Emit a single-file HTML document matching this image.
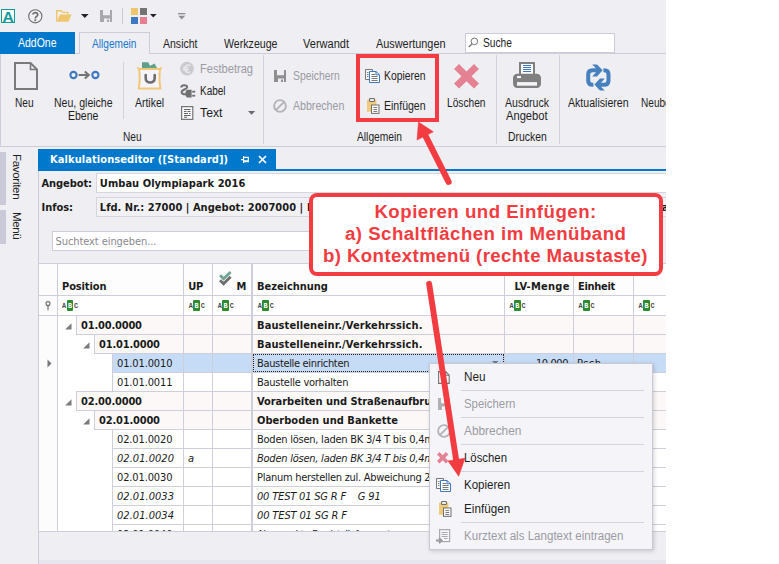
<!DOCTYPE html>
<html><head><meta charset="utf-8">
<style>
html,body{margin:0;padding:0;background:#fff;}
body{width:779px;height:564px;overflow:hidden;position:relative;}
#app{position:absolute;left:0;top:0;width:666px;height:564px;background:#eeeef3;overflow:hidden;font-family:"Liberation Sans",sans-serif;font-size:12px;color:#1e1e1e;}
.a{position:absolute;}
.t{position:absolute;white-space:nowrap;line-height:14px;font-family:"Liberation Sans",sans-serif;font-size:12px;}
.th{position:absolute;white-space:pre;line-height:14px;font-family:"DejaVu Sans Condensed","DejaVu Sans",sans-serif;font-size:11px;color:#1a1a1a;}
.b{font-weight:bold;}
.i{font-style:italic;}
.dis{color:#9b9ba3;}
svg{position:absolute;overflow:visible;}
.vsep{position:absolute;width:1px;background:#d2d2dc;}
.hl{position:absolute;height:1px;background:#cfcfdb;}
.fi{font:bold 6.8px/8px "Liberation Mono",monospace;color:#4a4a4a;}
.co{font-size:18.67px;line-height:22px;color:#f23c41;}
.vl{position:absolute;width:1px;background:#cfcfdb;}
</style></head><body>
<div id="app">

<!-- ===== QAT ===== -->
<div id="qat">
  <div class="a" style="left:1px;top:9px;width:12px;height:12px;border:1.5px solid #129a9a;background:#f6fbfb;"></div>
  <div class="t b" style="left: 2.5px; font-size: 15.5px; color: rgb(18, 154, 154); top: 10px;">A</div>
  <svg style="left:28px;top:9px" width="15" height="15" viewBox="0 0 15 15"><circle cx="7.3" cy="7.3" r="6.6" fill="#f2f2f6" stroke="#6d6d6d" stroke-width="1.1"></circle><path d="M4.9 5.6 C4.9 3 9.7 3 9.7 5.7 C9.7 7.5 7.3 7.4 7.3 9.4" fill="none" stroke="#6d6d6d" stroke-width="1.7"></path><rect x="6.4" y="10.3" width="1.8" height="1.8" fill="#6d6d6d"></rect></svg>
  <svg style="left:56px;top:10px" width="16" height="12" viewBox="0 0 16 12"><path d="M0.7 11.2 V0.8 H5.2 L6.8 2.4 H11.7 V4.6" fill="none" stroke="#efc56e" stroke-width="1.4"></path><path d="M4 4.4 H15.6 L12.4 11.8 H0.6 Z" fill="#efc56e"></path></svg>
  <svg style="left:81px;top:14px" width="8" height="4" viewBox="0 0 8 4"><path d="M0 0 H7.6 L3.8 4 Z" fill="#222"></path></svg>
  <svg style="left:100px;top:10px" width="12" height="12" viewBox="0 0 12 12"><path d="M0 0 H12 V12 H0 Z M3 0 V5.3 H10 V0 Z M4 8.4 V12 H10 V8.4 Z" fill="#a9a9ad" fill-rule="evenodd"></path><rect x="7" y="9.5" width="2" height="2.5" fill="#a9a9ad"></rect></svg>
  <div class="a" style="left:122px;top:8px;width:1px;height:16px;background:#c9c9d3;"></div>
  <div class="a" style="left:131px;top:8px;width:7px;height:7px;background:#efc56e;"></div>
  <div class="a" style="left:140px;top:8px;width:7px;height:7px;background:#737373;"></div>
  <div class="a" style="left:131px;top:17px;width:7px;height:7px;background:#3f78bf;"></div>
  <div class="a" style="left:140px;top:17px;width:7px;height:7px;background:#e87d92;"></div>
  <svg style="left:150px;top:14px" width="7" height="4" viewBox="0 0 7 4"><path d="M0 0 H6.6 L3.3 3.6 Z" fill="#222"></path></svg>
  <svg style="left:178px;top:13px" width="8" height="7" viewBox="0 0 8 7"><rect x="0" y="0" width="7.4" height="1.3" fill="#8f8f95"></rect><path d="M0.2 2.8 H7.2 L3.7 6.4 Z" fill="#8f8f95"></path></svg>
</div>

<!-- ===== TABS ===== -->
<div id="tabs">
  <div class="a" style="left:0;top:53px;width:666px;height:1px;background:#cdcdd9;"></div>
  <div class="a" style="left:0;top:32px;width:75px;height:22px;background:#0079cc;"></div>
  <div class="t" style="left: 18px; color: rgb(255, 255, 255); transform-origin: 0px 0px; transform: scaleX(0.874); top: 36px;">AddOne</div>
  <div class="a" style="left:79px;top:32px;width:71px;height:22px;border:1px solid #cdcdd9;border-bottom:none;background:#eeeef3;box-sizing:border-box;"></div>
  <div class="t" style="left: 92px; color: rgb(22, 119, 207); transform-origin: 0px 0px; transform: scaleX(0.844); top: 37px;">Allgemein</div>
  <div class="t" style="left: 163px; transform-origin: 0px 0px; transform: scaleX(0.877); top: 37px;">Ansicht</div>
  <div class="t" style="left: 223.5px; transform-origin: 0px 0px; transform: scaleX(0.885); top: 37px;">Werkzeuge</div>
  <div class="t" style="left: 303px; transform-origin: 0px 0px; transform: scaleX(0.919); top: 37px;">Verwandt</div>
  <div class="t" style="left: 376px; transform-origin: 0px 0px; transform: scaleX(0.906); top: 37px;">Auswertungen</div>
  <div class="a" style="left:465px;top:33px;width:150px;height:19.5px;background:#fff;border:1px solid #cdcdd9;box-sizing:border-box;"></div>
  <svg style="left:468px;top:37px" width="11" height="11" viewBox="0 0 11 11"><circle cx="6.4" cy="4.4" r="3.3" fill="none" stroke="#777" stroke-width="1"></circle><path d="M4 6.8 L0.8 10" stroke="#777" stroke-width="1.3"></path></svg>
  <div class="t" style="left: 483px; transform-origin: 0px 0px; transform: scaleX(0.852); top: 36px;">Suche</div>
</div>

<!-- ===== RIBBON ===== -->
<div id="ribbon">
  <div class="a" style="left:0;top:54px;width:1px;height:92px;background:#cdcdd9;"></div>
  <div class="a" style="left:0;top:146px;width:666px;height:1px;background:#cdcdd9;"></div>
  <!-- Neu -->
  <svg style="left:14px;top:62px" width="24" height="28" viewBox="0 0 24 28"><path d="M1 1 H16.5 L23 7.5 V27 H1 Z" fill="none" stroke="#7a7a7a" stroke-width="2" stroke-linejoin="miter"></path><path d="M16.5 1 V7.5 H23" fill="none" stroke="#7a7a7a" stroke-width="1.6"></path></svg>
  <div class="t" style="left: 15.4px; transform-origin: 0px 0px; transform: scaleX(0.845); top: 96px;">Neu</div>
  <!-- Neu, gleiche Ebene -->
  <svg style="left:68.6px;top:70px" width="31" height="10" viewBox="0 0 31 10"><circle cx="4.5" cy="5" r="3.1" fill="none" stroke="#3f78bf" stroke-width="2.1"></circle><circle cx="26.4" cy="5" r="3.1" fill="none" stroke="#3f78bf" stroke-width="2.1"></circle><path d="M9.6 5 H19.4" stroke="#737373" stroke-width="2"></path><path d="M15.8 1.4 L19.8 5 L15.8 8.6" fill="none" stroke="#737373" stroke-width="2"></path></svg>
  <div class="t" style="left: 54.4px; transform-origin: 0px 0px; transform: scaleX(0.878); top: 96px;">Neu, gleiche</div>
  <div class="t" style="left: 68px; transform-origin: 0px 0px; transform: scaleX(0.873); top: 108.8px;">Ebene</div>
  <div class="vsep" style="left:123px;top:62px;height:57px;"></div>
  <!-- Artikel -->
  <svg style="left:137px;top:61px" width="26" height="30" viewBox="0 0 26 30"><path d="M5 7.4 V1.2 H11.2 L13.2 5.2 L8.4 7.4 Z" fill="#5f9f8a"></path><path d="M7.6 7.4 L17.6 2.6 L20.2 7.4 Z" fill="#62a38c"></path><path d="M2.2 8 C2.9 14 2.9 22 1.7 27.6 H23.5 C22.3 22 22.3 14 23 8 Z" fill="#f5f5f9" stroke="#f0c878" stroke-width="2" stroke-linejoin="round"></path><path d="M0.9 6.9 L2.4 8.2 M24.3 6.9 L22.8 8.2" stroke="#f0c878" stroke-width="1.8" stroke-linecap="round"></path><path d="M8.7 14 V17.2 C8.7 23 17.7 23 17.7 17.2 V14" fill="none" stroke="#6e6e6e" stroke-width="2.6" stroke-linecap="round"></path></svg>
  <div class="t" style="left: 135.3px; transform-origin: 0px 0px; transform: scaleX(0.87); top: 96px;">Artikel</div>
  <!-- small buttons -->
  <svg style="left:180px;top:62px" width="14" height="14" viewBox="0 0 14 14"><circle cx="7" cy="6.6" r="6.9" fill="#cbcbcf"></circle><path d="M10.2 3.6 C7.6 2 4.8 3.8 4.8 6.7 C4.8 9.6 7.6 11.4 10.2 9.8 M3 5.7 H8.6 M3 7.7 H8.6" fill="none" stroke="#e9e9ed" stroke-width="1.4"></path></svg>
  <div class="t dis" style="left: 199.5px; transform-origin: 0px 0px; transform: scaleX(0.924); top: 62px;">Festbetrag</div>
  <svg style="left:180px;top:84px" width="16" height="14" viewBox="0 0 16 14"><path d="M1.2 3.4 C1.2 0.6 7.2 0.4 7.2 3 C7.2 5.6 1.6 5.4 1.6 8.2 C1.6 10.2 4 10.4 6.4 10.2" fill="none" stroke="#707070" stroke-width="2"></path><path d="M7.6 5.8 H11.6 V13.6 H7.6 C4.6 13.6 4.6 5.8 7.6 5.8 Z" fill="#707070"></path><rect x="12.2" y="6.8" width="3" height="1.8" fill="#707070"></rect><rect x="12.2" y="10.8" width="3" height="1.8" fill="#707070"></rect></svg>
  <div class="t" style="left: 199.5px; transform-origin: 0px 0px; transform: scaleX(0.834); top: 84px;">Kabel</div>
  <svg style="left:181px;top:106px" width="13" height="14" viewBox="0 0 13 14"><rect x="0.6" y="0.6" width="11.2" height="12.8" fill="#f8f8fb" stroke="#757575" stroke-width="1.2"></rect><path d="M3 3.5 H9.5 M3 5.5 H5.5 M6.5 5.5 H9.5 M3 7.5 H7 M8 7.5 H9.5 M3 9.5 H9.5 M3 11.3 H6" stroke="#666" stroke-width="1.1"></path></svg>
  <div class="t" style="left: 199.5px; transform-origin: 0px 0px; transform: scaleX(1.022); top: 106.2px;">Text</div>
  <svg style="left:247.5px;top:111px" width="8" height="4" viewBox="0 0 8 4"><path d="M0 0 H7.2 L3.6 3.8 Z" fill="#6a6a6a"></path></svg>
  <div class="t" style="left: 122.7px; transform-origin: 0px 0px; transform: scaleX(0.845); top: 130px;">Neu</div>
  <div class="vsep" style="left:263px;top:55px;height:89px;"></div>
  <!-- Speichern / Abbrechen -->
  <svg style="left:274px;top:70px" width="12" height="12" viewBox="0 0 12 12"><path d="M0 0 H12 V12 H0 Z M3 0 V5.3 H10 V0 Z M4 8.4 V12 H10 V8.4 Z" fill="#8f8f92" fill-rule="evenodd"></path><rect x="7" y="9.5" width="2" height="2.5" fill="#8f8f92"></rect></svg>
  <div class="t dis" style="left: 292.7px; transform-origin: 0px 0px; transform: scaleX(0.864); top: 69.3px;">Speichern</div>
  <svg style="left:273px;top:99px" width="14" height="14" viewBox="0 0 14 14"><circle cx="7" cy="7" r="5.9" fill="none" stroke="#b4b4b8" stroke-width="1.9"></circle><path d="M2.8 11.2 L11.2 2.8" stroke="#b4b4b8" stroke-width="1.9"></path></svg>
  <div class="t dis" style="left: 292.7px; transform-origin: 0px 0px; transform: scaleX(0.884); top: 99.3px;">Abbrechen</div>
  <!-- Kopieren / Einfügen -->
  <svg style="left:365px;top:69px" width="15" height="14" viewBox="0 0 15 14"><path d="M0.5 0.5 H7.5 V10.5 H0.5 Z" fill="#f7f7fa" stroke="#777" stroke-width="1"></path><path d="M2 3.5 H3.5 M2 5.5 H3.5 M2 7.5 H3.5" stroke="#7a7a7a" stroke-width="1"></path><path d="M4.5 2.5 H11 L14.5 5.8 V13.5 H4.5 Z" fill="#fbfcfe" stroke="#3f78bf" stroke-width="1"></path><path d="M6.5 5.5 H10.5 M6.5 7.5 H12.5 M6.5 9.5 H12.5 M6.5 11.5 H12.5" stroke="#7a7a7a" stroke-width="1"></path><path d="M11 2.5 V5.8 H14.3" fill="none" stroke="#3f78bf" stroke-width="1"></path></svg>
  <div class="t" style="left: 384.4px; transform-origin: 0px 0px; transform: scaleX(0.866); top: 69.3px;">Kopieren</div>
  <svg style="left:367px;top:98px" width="14" height="16" viewBox="0 0 14 16"><path d="M0 1.8 H9.4 V7 H4.5 V13.8 H0 Z" fill="#f1cb7c"></path><rect x="2.5" y="0.5" width="5" height="3" rx="0.8" fill="#ececf0" stroke="#707070" stroke-width="1.1"></rect><rect x="4.5" y="7" width="7.5" height="8.4" fill="#fafafc" stroke="#707070" stroke-width="1"></rect><path d="M6.4 9.5 H10.2 M6.4 11.5 H10.2 M6.4 13.5 H10.2" stroke="#707070" stroke-width="0.9"></path></svg>
  <div class="t" style="left: 384.4px; transform-origin: 0px 0px; transform: scaleX(0.878); top: 99.3px;">Einfügen</div>
  <div class="t" style="left: 356.7px; transform-origin: 0px 0px; transform: scaleX(0.854); top: 130px;">Allgemein</div>
  <!-- Löschen -->
  <svg style="left:453.5px;top:63.8px" width="25" height="25" viewBox="0 0 25 25"><path d="M5 0 L12.5 7.5 L20 0 L25 5 L17.5 12.3 L25 19.6 L20 24.6 L12.5 17.2 L5 24.6 L0 19.6 L7.5 12.3 L0 5 Z" fill="#e48193"></path></svg>
  <div class="t" style="left: 446.5px; transform-origin: 0px 0px; transform: scaleX(0.848); top: 96px;">Löschen</div>
  <div class="vsep" style="left:496px;top:55px;height:89px;"></div>
  <!-- Ausdruck Angebot -->
  <svg style="left:513px;top:62px" width="28" height="26" viewBox="0 0 28 26"><rect x="7" y="1" width="14" height="12" fill="#fbfcfe" stroke="#808080" stroke-width="2"></rect><path d="M10 3.5 H18 M10 5.5 H18 M10 7.5 H18 M10 9.5 H18" stroke="#3f78bf" stroke-width="1"></path><rect x="0" y="11.8" width="28" height="14.1" rx="4.2" fill="#808080"></rect><rect x="4" y="20.1" width="20" height="3.6" fill="#f4f4f8"></rect><rect x="4" y="14" width="4" height="2.1" fill="#f4f4f8"></rect></svg>
  <div class="t" style="left: 504.9px; transform-origin: 0px 0px; transform: scaleX(0.879); top: 96px;">Ausdruck</div>
  <div class="t" style="left: 505.7px; transform-origin: 0px 0px; transform: scaleX(0.93); top: 108.8px;">Angebot</div>
  <div class="t" style="left: 507.5px; transform-origin: 0px 0px; transform: scaleX(0.866); top: 130px;">Drucken</div>
  <div class="vsep" style="left:559px;top:55px;height:89px;"></div>
  <!-- Aktualisieren -->
  <svg style="left:585.5px;top:63.5px" width="25" height="27" viewBox="0 0 25 27"><path d="M10 6.3 H6.6 C3.6 6.3 2.2 8 2.2 10.6 V16.5 C2.2 19.4 3.8 20.8 6.6 20.8 H7.4" fill="none" stroke="#4780bf" stroke-width="4"></path><path d="M6.2 0.4 H11 L16.6 6.3 L11 12.4 H6.2 L10 8.3 V4.3 Z" fill="#4780bf"></path><path d="M17.4 6.3 H18.2 C21 6.3 22.5 8 22.5 10.6 V16.5 C22.5 19.4 21 20.8 18.2 20.8 H15" fill="none" stroke="#4780bf" stroke-width="4"></path><path d="M18.8 14.6 H14 L8.4 20.6 L14 26.6 H18.8 L15 22.7 V18.7 Z" fill="#4780bf"></path></svg>
  <div class="t" style="left: 567.8px; transform-origin: 0px 0px; transform: scaleX(0.882); top: 96px;">Aktualisieren</div>
  <div class="t" style="left: 641.2px; transform-origin: 0px 0px; transform: scaleX(0.84); top: 96px;">Neubewerten</div>
</div>
<!-- ===== SIDEBAR ===== -->
<div id="side">
  <div class="a" style="left:0;top:152px;width:5.5px;height:52.5px;background:#c9c9d8;"></div>
  <div class="a" style="left:0;top:210px;width:5.5px;height:34px;background:#c9c9d8;"></div>
  <div class="t" style="left:24px;top:154px;transform-origin:0 0;transform:rotate(90deg);letter-spacing:-0.3px;font-size:11.5px;">Favoriten</div>
  <div class="t" style="left:24px;top:211.5px;transform-origin:0 0;transform:rotate(90deg);letter-spacing:-0.4px;font-size:11.5px;">Menü</div>
</div>
<!-- ===== DOC ===== -->
<div id="doc">
  <div class="a" style="left:38px;top:149px;width:1px;height:415px;background:#cdcdd9;"></div>
  <div class="a" style="left:38px;top:149px;width:238px;height:20px;background:#0079cc;"></div>
  <div class="a" style="left:38px;top:169px;width:628px;height:2px;background:#0079cc;"></div>
  <div class="th b" style="left: 50px; color: rgb(255, 255, 255); letter-spacing: 0.08px; top: 153px;">Kalkulationseditor ([Standard])</div>
  <svg style="left:241px;top:156px" width="8" height="7" viewBox="0 0 8 7"><path d="M0 3.6 H2.6 M2.6 0 V7 M2.6 1.3 H7.3 V5.6 H2.6 M2.6 4.8 H7.3" fill="none" stroke="#fff" stroke-width="1.2"></path></svg>
  <svg style="left:258px;top:155px" width="9" height="9" viewBox="0 0 9 9"><path d="M1 1 L8 8 M8 1 L1 8" stroke="#fff" stroke-width="1.7"></path></svg>
  <!-- Angebot -->
  <div class="th b" style="left: 41.5px; letter-spacing: -0.08px; top: 177px;">Angebot:</div>
  <div class="a" style="left:96px;top:173px;width:570px;height:19.5px;background:#fff;border:1px solid #d5d5e0;border-right:none;box-sizing:border-box;"></div>
  <div class="th b" style="left: 99.8px; letter-spacing: 0.05px; top: 177px;">Umbau Olympiapark 2016</div>
  <div class="th b" style="left: 41.5px; letter-spacing: -0.04px; top: 200.5px;">Infos:</div>
  <div class="a" style="left:96px;top:197px;width:570px;height:19.5px;background:#f2f2f6;border:1px solid #d5d5e0;border-right:none;box-sizing:border-box;"></div>
  <div class="th b" style="left: 99.8px; letter-spacing: 0.03px; top: 200.5px;">Lfd. Nr.: 27000 | Angebot: 2007000 |</div>
  <div class="th b" style="left: 307px; top: 200.5px;">Bezeichnung: Umbau Olympiapark 2016 | Bearbeiter: Administrator</div>
  <!-- search -->
  <div class="a" style="left:52px;top:231px;width:600px;height:19.5px;background:#fff;border:1px solid #cdcdd9;box-sizing:border-box;"></div>
  <div class="th" style="left: 55.5px; color: rgb(138, 138, 144); letter-spacing: -0.08px; top: 235px;">Suchtext eingeben...</div>
</div>
<!-- ===== GRID ===== -->
<!--GRIDSTART-->
<div id="grid">
<div class="a" style="left:39px;top:264px;width:627px;height:267px;background:#fff;"></div>
<div class="a" style="left:39px;top:264px;width:18px;height:267px;background:#fcfcfd;"></div>
<div class="a" style="left:57px;top:264px;width:609px;height:31px;background:#fdfdfe;"></div>
<div class="a" style="left:76px;top:316px;width:590px;height:18px;background:#fcf8f7;"></div>
<div class="th b" style="left: 81px; letter-spacing: -0.18px; top: 318.6px;">01.00.0000</div>
<div class="th b" style="left: 257px; letter-spacing: 0.11px; top: 318.6px;">Baustelleneinr./Verkehrssich.</div>
<div class="hl" style="left:76px;top:334px;width:590px;background:#cfcfdc;"></div>
<div class="hl" style="left:76px;top:315px;width:590px;background:#cfcfdc;"></div>
<div class="vl" style="left:76px;top:315px;height:19px;background:#cfcfdc;"></div>
<svg style="left:65px;top:322.5px" width="7" height="7" viewBox="0 0 7 7"><path d="M6.5 0.2 V6.5 H0.2 Z" fill="#7a7a80"></path></svg>
<div class="a" style="left:94px;top:335px;width:572px;height:18px;background:#fcf8f7;"></div>
<div class="th b" style="left: 99px; letter-spacing: -0.18px; top: 337.6px;">01.01.0000</div>
<div class="th b" style="left: 257px; letter-spacing: 0.11px; top: 337.6px;">Baustelleneinr./Verkehrssich.</div>
<div class="hl" style="left:94px;top:353px;width:572px;background:#cfcfdc;"></div>
<div class="hl" style="left:94px;top:334px;width:572px;background:#cfcfdc;"></div>
<div class="vl" style="left:94px;top:334px;height:19px;background:#cfcfdc;"></div>
<svg style="left:83px;top:341.5px" width="7" height="7" viewBox="0 0 7 7"><path d="M6.5 0.2 V6.5 H0.2 Z" fill="#7a7a80"></path></svg>
<div class="a" style="left:112px;top:354px;width:554px;height:18px;background:#c6dbf5;"></div>
<div class="th" style="left: 117px; letter-spacing: -0.13px; top: 356.6px;">01.01.0010</div>
<div class="th" style="left: 257px; letter-spacing: -0.34px; top: 356.6px;">Baustelle einrichten</div>
<div class="hl" style="left:112px;top:372px;width:554px;background:#cfcfdc;"></div>
<div class="hl" style="left:112px;top:353px;width:554px;background:#cfcfdc;"></div>
<div class="vl" style="left:112px;top:353px;height:19px;background:#cfcfdc;"></div>
<div class="th" style="left: 117px; letter-spacing: -0.13px; top: 375.6px;">01.01.0011</div>
<div class="th" style="left: 257px; letter-spacing: -0.26px; top: 375.6px;">Baustelle vorhalten</div>
<div class="hl" style="left:112px;top:391px;width:554px;background:#cfcfdc;"></div>
<div class="hl" style="left:112px;top:372px;width:554px;background:#cfcfdc;"></div>
<div class="vl" style="left:112px;top:372px;height:19px;background:#cfcfdc;"></div>
<div class="a" style="left:76px;top:392px;width:590px;height:18px;background:#fcf8f7;"></div>
<div class="th b" style="left: 81px; letter-spacing: -0.18px; top: 394.6px;">02.00.0000</div>
<div class="th b" style="left: 257px; letter-spacing: -0.04px; top: 394.6px;">Vorarbeiten und Straßenaufbruch</div>
<div class="hl" style="left:76px;top:410px;width:590px;background:#cfcfdc;"></div>
<div class="hl" style="left:76px;top:391px;width:590px;background:#cfcfdc;"></div>
<div class="vl" style="left:76px;top:391px;height:19px;background:#cfcfdc;"></div>
<svg style="left:65px;top:398.5px" width="7" height="7" viewBox="0 0 7 7"><path d="M6.5 0.2 V6.5 H0.2 Z" fill="#7a7a80"></path></svg>
<div class="a" style="left:94px;top:411px;width:572px;height:18px;background:#fcf8f7;"></div>
<div class="th b" style="left: 99px; letter-spacing: -0.18px; top: 413.6px;">02.01.0000</div>
<div class="th b" style="left: 257px; letter-spacing: 0.03px; top: 413.6px;">Oberboden und Bankette</div>
<div class="hl" style="left:94px;top:429px;width:572px;background:#cfcfdc;"></div>
<div class="hl" style="left:94px;top:410px;width:572px;background:#cfcfdc;"></div>
<div class="vl" style="left:94px;top:410px;height:19px;background:#cfcfdc;"></div>
<svg style="left:83px;top:417.5px" width="7" height="7" viewBox="0 0 7 7"><path d="M6.5 0.2 V6.5 H0.2 Z" fill="#7a7a80"></path></svg>
<div class="th" style="left: 117px; letter-spacing: -0.13px; top: 432.6px;">02.01.0020</div>
<div class="th" style="left: 257px; letter-spacing: -0.24px; top: 432.6px;">Boden lösen, laden BK 3/4 T bis 0,4m</div>
<div class="hl" style="left:112px;top:448px;width:554px;background:#cfcfdc;"></div>
<div class="hl" style="left:112px;top:429px;width:554px;background:#cfcfdc;"></div>
<div class="vl" style="left:112px;top:429px;height:19px;background:#cfcfdc;"></div>
<div class="th i" style="left: 117px; letter-spacing: 0.04px; top: 451.6px;">02.01.0020</div>
<div class="th i" style="left: 188px; top: 451.6px;">a</div>
<div class="th i" style="left: 257px; letter-spacing: -0.24px; top: 451.6px;">Boden lösen, laden BK 3/4 T bis 0,4m</div>
<div class="hl" style="left:112px;top:467px;width:554px;background:#cfcfdc;"></div>
<div class="hl" style="left:112px;top:448px;width:554px;background:#cfcfdc;"></div>
<div class="vl" style="left:112px;top:448px;height:19px;background:#cfcfdc;"></div>
<div class="th" style="left: 117px; letter-spacing: -0.13px; top: 470.6px;">02.01.0030</div>
<div class="th" style="left: 257px; letter-spacing: -0.28px; top: 470.6px;">Planum herstellen zul. Abweichung 2cm</div>
<div class="hl" style="left:112px;top:486px;width:554px;background:#cfcfdc;"></div>
<div class="hl" style="left:112px;top:467px;width:554px;background:#cfcfdc;"></div>
<div class="vl" style="left:112px;top:467px;height:19px;background:#cfcfdc;"></div>
<div class="th i" style="left: 117px; letter-spacing: 0.04px; top: 489.6px;">02.01.0033</div>
<div class="th i" style="left: 257px; letter-spacing: -0.18px; top: 489.6px;">00 TEST 01 SG R F    G 91</div>
<div class="hl" style="left:112px;top:505px;width:554px;background:#cfcfdc;"></div>
<div class="hl" style="left:112px;top:486px;width:554px;background:#cfcfdc;"></div>
<div class="vl" style="left:112px;top:486px;height:19px;background:#cfcfdc;"></div>
<div class="th i" style="left: 117px; letter-spacing: 0.04px; top: 508.6px;">02.01.0034</div>
<div class="th i" style="left: 257px; letter-spacing: -0.13px; top: 508.6px;">00 TEST 01 SG R F</div>
<div class="hl" style="left:112px;top:524px;width:554px;background:#cfcfdc;"></div>
<div class="hl" style="left:112px;top:505px;width:554px;background:#cfcfdc;"></div>
<div class="vl" style="left:112px;top:505px;height:19px;background:#cfcfdc;"></div>
<div class="th" style="left: 117px; letter-spacing: -0.13px; top: 527.6px;">02.01.0040</div>
<div class="th" style="left: 257px; letter-spacing: -0.62px; top: 527.6px;">Abgesenkte Bordst. liefern, setzen</div>
<div class="hl" style="left:112px;top:543px;width:554px;background:#cfcfdc;"></div>
<div class="hl" style="left:112px;top:524px;width:554px;background:#cfcfdc;"></div>
<div class="vl" style="left:112px;top:524px;height:19px;background:#cfcfdc;"></div>
<div class="th" style="left: 536px; letter-spacing: -0.42px; top: 356.6px;">10,000</div>
<div class="th" style="left: 577px; letter-spacing: 0.45px; top: 356.6px;">Psch</div>
<div class="a" style="left:253px;top:354px;width:251px;height:18px;border:1px dotted #222;box-sizing:border-box;"></div>
<svg style="left:492px;top:361px" width="7" height="4" viewBox="0 0 7 4"><path d="M0 0 H6.4 L3.2 3.4 Z" fill="#7a7a80"></path></svg>
<svg style="left:46.8px;top:359px" width="5" height="9" viewBox="0 0 5 9"><path d="M0.5 0.5 L4.5 4.5 L0.5 8.5 Z" fill="#77777d"></path></svg>
<div class="hl" style="left:39px;top:263px;width:627px;background:#cfcfdc;"></div>
<div class="hl" style="left:39px;top:295px;width:627px;background:#cfcfdc;"></div>
<div class="hl" style="left:39px;top:315px;width:627px;background:#cfcfdc;"></div>
<div class="hl" style="left:39px;top:531px;width:627px;background:#cfcfdc;"></div>
<div class="vl" style="left:57px;top:264px;height:267px;width:1px;background:#cfcfdc;"></div>
<div class="vl" style="left:183px;top:264px;height:267px;width:1px;background:#cfcfdc;"></div>
<div class="vl" style="left:212px;top:264px;height:267px;width:1px;background:#cfcfdc;"></div>
<div class="vl" style="left:251px;top:264px;height:267px;width:2px;background:#cfcfdc;"></div>
<div class="vl" style="left:504px;top:264px;height:267px;width:1px;background:#cfcfdc;"></div>
<div class="vl" style="left:573px;top:264px;height:267px;width:1px;background:#cfcfdc;"></div>
<div class="vl" style="left:633px;top:264px;height:267px;width:1px;background:#cfcfdc;"></div>
<div class="th b" style="left: 62px; letter-spacing: -0.12px; top: 280px;">Position</div>
<div class="th b" style="left: 188.3px; letter-spacing: -0.3px; top: 280px;">UP</div>
<div class="th b" style="left: 236.5px; letter-spacing: -0.66px; top: 280px;">M</div>
<div class="th b" style="left: 257px; letter-spacing: -0.03px; top: 280px;">Bezeichnung</div>
<div class="th b" style="left: 514.4px; letter-spacing: 0.26px; top: 280px;">LV-Menge</div>
<div class="th b" style="left: 577.9px; letter-spacing: -0.27px; top: 280px;">Einheit</div>
<svg style="left:219px;top:271px" width="13" height="15" viewBox="0 0 13 15"><path d="M1 9.2 L4.6 12.8 L11.6 5.8" fill="none" stroke="#6e6e6e" stroke-width="2.8"></path><path d="M1 4.2 L4.6 7.8 L11.6 0.9" fill="none" stroke="#6fa692" stroke-width="2.8"></path></svg>
<div class="a" style="left:66.5px;top:300px;width:6.9px;height:10.7px;background:#2e8a2e;border-radius:1px;"></div>
<div class="a fi" style="left:62px;top:302px;">A</div>
<div class="a fi" style="left:67.9px;top:302px;color:#fff;">B</div>
<div class="a fi" style="left:74px;top:302px;">C</div>
<div class="a" style="left:193.2px;top:300px;width:6.9px;height:10.7px;background:#2e8a2e;border-radius:1px;"></div>
<div class="a fi" style="left:188.7px;top:302px;">A</div>
<div class="a fi" style="left:194.6px;top:302px;color:#fff;">B</div>
<div class="a fi" style="left:200.7px;top:302px;">C</div>
<div class="a" style="left:222.2px;top:300px;width:6.9px;height:10.7px;background:#2e8a2e;border-radius:1px;"></div>
<div class="a fi" style="left:217.7px;top:302px;">A</div>
<div class="a fi" style="left:223.6px;top:302px;color:#fff;">B</div>
<div class="a fi" style="left:229.7px;top:302px;">C</div>
<div class="a" style="left:262.2px;top:300px;width:6.9px;height:10.7px;background:#2e8a2e;border-radius:1px;"></div>
<div class="a fi" style="left:257.7px;top:302px;">A</div>
<div class="a fi" style="left:263.59999999999997px;top:302px;color:#fff;">B</div>
<div class="a fi" style="left:269.7px;top:302px;">C</div>
<div class="a" style="left:513.9px;top:300px;width:6.9px;height:10.7px;background:#2e8a2e;border-radius:1px;"></div>
<div class="a fi" style="left:509.4px;top:302px;">A</div>
<div class="a fi" style="left:515.3px;top:302px;color:#fff;">B</div>
<div class="a fi" style="left:521.4px;top:302px;">C</div>
<div class="a" style="left:582.9px;top:300px;width:6.9px;height:10.7px;background:#2e8a2e;border-radius:1px;"></div>
<div class="a fi" style="left:578.4px;top:302px;">A</div>
<div class="a fi" style="left:584.3px;top:302px;color:#fff;">B</div>
<div class="a fi" style="left:590.4px;top:302px;">C</div>
<div class="a" style="left:643.0px;top:300px;width:6.9px;height:10.7px;background:#2e8a2e;border-radius:1px;"></div>
<div class="a fi" style="left:638.5px;top:302px;">A</div>
<div class="a fi" style="left:644.4px;top:302px;color:#fff;">B</div>
<div class="a fi" style="left:650.5px;top:302px;">C</div>
<svg style="left:45px;top:301px" width="6" height="10" viewBox="0 0 6 10"><circle cx="3" cy="2.6" r="2" fill="none" stroke="#6a6a6a" stroke-width="1.1"></circle><path d="M3 4.6 V9.2" stroke="#6a6a6a" stroke-width="1.1"></path></svg>
<div class="a" style="left:39px;top:532px;width:627px;height:32px;background:#eeeef3;"></div>
<div class="a" style="left:39px;top:560px;width:627px;height:4px;background:#e6e6ee;"></div>
</div>
<!--GRIDEND-->
<!-- ===== MENU ===== -->
<div id="menu">
  <div class="a" style="left:429px;top:363px;width:223.5px;height:187px;background:#f5f5f9;border:1px solid #c9c9d5;box-sizing:border-box;box-shadow:1px 1px 4px rgba(0,0,0,0.18);"></div>
  <!-- Neu -->
  <svg style="left:438px;top:370.5px" width="12" height="13" viewBox="0 0 12 13"><path d="M0.6 0.6 H7.6 L11.2 4.2 V12.4 H0.6 Z M7.6 0.6 V4.2 H11.2" fill="#fafafc" stroke="#707070" stroke-width="1.1"></path></svg>
  <div class="t" style="left: 464.3px; transform-origin: 0px 0px; transform: scaleX(0.977); top: 370px;">Neu</div>
  <div class="hl" style="left:461px;top:390px;width:183px;background:#d4d4de;"></div>
  <svg style="left:437.5px;top:398px" width="12" height="12" viewBox="0 0 12 12"><path d="M0 0 H12 V12 H0 Z M3 0 V5.3 H10 V0 Z M4 8.4 V12 H10 V8.4 Z" fill="#b0b0b4" fill-rule="evenodd"></path><rect x="7" y="9.5" width="2" height="2.5" fill="#b0b0b4"></rect></svg>
  <div class="t dis" style="left: 464.3px; transform-origin: 0px 0px; transform: scaleX(0.949); top: 397px;">Speichern</div>
  <div class="hl" style="left:461px;top:417px;width:183px;background:#d4d4de;"></div>
  <svg style="left:437px;top:424px" width="14" height="14" viewBox="0 0 14 14"><circle cx="7" cy="7" r="5.9" fill="none" stroke="#b4b4b8" stroke-width="1.9"></circle><path d="M2.8 11.2 L11.2 2.8" stroke="#b4b4b8" stroke-width="1.9"></path></svg>
  <div class="t dis" style="left: 464.3px; transform-origin: 0px 0px; transform: scaleX(0.989); top: 423.8px;">Abbrechen</div>
  <div class="hl" style="left:461px;top:444px;width:183px;background:#d4d4de;"></div>
  <svg style="left:437.3px;top:452.4px" width="11.4" height="11.4" viewBox="0 0 11 11"><path d="M2.4 0 L5.5 3.1 L8.6 0 L11 2.4 L7.9 5.5 L11 8.6 L8.6 11 L5.5 7.9 L2.4 11 L0 8.6 L3.1 5.5 L0 2.4 Z" fill="#e48193"></path></svg>
  <div class="t" style="left: 464.3px; transform-origin: 0px 0px; transform: scaleX(0.948); top: 450.8px;">Löschen</div>
  <div class="hl" style="left:461px;top:471px;width:183px;background:#d4d4de;"></div>
  <svg style="left:436.4px;top:478px" width="15" height="14" viewBox="0 0 15 14"><path d="M0.5 0.5 H7.5 V10.5 H0.5 Z" fill="#f7f7fa" stroke="#777" stroke-width="1"></path><path d="M2 3.5 H3.5 M2 5.5 H3.5 M2 7.5 H3.5" stroke="#7a7a7a" stroke-width="1"></path><path d="M4.5 2.5 H11 L14.5 5.8 V13.5 H4.5 Z" fill="#fbfcfe" stroke="#3f78bf" stroke-width="1"></path><path d="M6.5 5.5 H10.5 M6.5 7.5 H12.5 M6.5 9.5 H12.5 M6.5 11.5 H12.5" stroke="#7a7a7a" stroke-width="1"></path><path d="M11 2.5 V5.8 H14.3" fill="none" stroke="#3f78bf" stroke-width="1"></path></svg>
  <div class="t" style="left: 464.3px; transform-origin: 0px 0px; transform: scaleX(0.962); top: 477.8px;">Kopieren</div>
  <svg style="left:438.7px;top:501px" width="14" height="16" viewBox="0 0 14 16"><path d="M0 1.8 H9.4 V7 H4.5 V13.8 H0 Z" fill="#f1cb7c"></path><rect x="2.5" y="0.5" width="5" height="3" rx="0.8" fill="#ececf0" stroke="#707070" stroke-width="1.1"></rect><rect x="4.5" y="7" width="7.5" height="8.4" fill="#fafafc" stroke="#707070" stroke-width="1"></rect><path d="M6.4 9.5 H10.2 M6.4 11.5 H10.2 M6.4 13.5 H10.2" stroke="#707070" stroke-width="0.9"></path></svg>
  <div class="t" style="left: 464.3px; transform-origin: 0px 0px; transform: scaleX(0.975); top: 501.8px;">Einfügen</div>
  <div class="hl" style="left:461px;top:522px;width:183px;background:#d4d4de;"></div>
  <svg style="left:436px;top:529px" width="15" height="15" viewBox="0 0 15 15"><rect x="3.6" y="0.6" width="10" height="12" fill="#f7f7fa" stroke="#a8a8ae" stroke-width="1.2"></rect><path d="M5.6 3.5 H11.6 M5.6 5.5 H11.6 M5.6 7.5 H11.6 M8 9.5 H11.6" stroke="#a8a8ae" stroke-width="1.1"></path><path d="M0 11.5 H5 M3 8.8 L5.8 11.5 L3 14.2" fill="none" stroke="#9a9aa0" stroke-width="1.8"></path></svg>
  <div class="t dis" style="left: 464.3px; transform-origin: 0px 0px; transform: scaleX(0.964); top: 528.5px;">Kurztext als Langtext eintragen</div>
</div>
<!-- ===== CALLOUT ===== -->
<div id="callout">
  <div class="a" style="left:355.5px;top:54px;width:83.5px;height:67.5px;border:4px solid #f23c41;box-sizing:border-box;"></div>
  <div class="a" style="left:309px;top:193.3px;width:354px;height:83px;border:4px solid #f23c41;border-radius:8px;background:#fff;box-sizing:border-box;"></div>
  <div class="t b co" style="left: 374.4px; letter-spacing: 0.5px; top: 201px;">Kopieren und Einfügen:</div>
  <div class="t b co" style="left: 345px; letter-spacing: 0.46px; top: 223px;">a) Schaltflächen im Menüband</div>
  <div class="t b co" style="left: 323px; letter-spacing: 0.39px; top: 245px;">b) Kontextmenü (rechte Maustaste)</div>
  <svg style="left:0;top:0" width="666" height="564" viewBox="0 0 666 564">
    <path d="M448.6 181.8 L424.6 134.2" stroke="#f23c41" stroke-width="6.2" stroke-linecap="round" fill="none"></path>
    <path d="M418.5 122.1 L417 140 L433.3 131.8 Z" fill="#f23c41" stroke="#f23c41" stroke-width="0.6" stroke-linejoin="round"></path>
    <path d="M429.1 283.8 L457 465.5" stroke="#f23c41" stroke-width="5.9" stroke-linecap="round" fill="none"></path>
    <path d="M458.7 476.3 L448.1 460.9 L464.9 458.2 Z" fill="#f23c41" stroke="#f23c41" stroke-width="0.6" stroke-linejoin="round"></path>
  </svg>
</div>
</div>

</body></html>
